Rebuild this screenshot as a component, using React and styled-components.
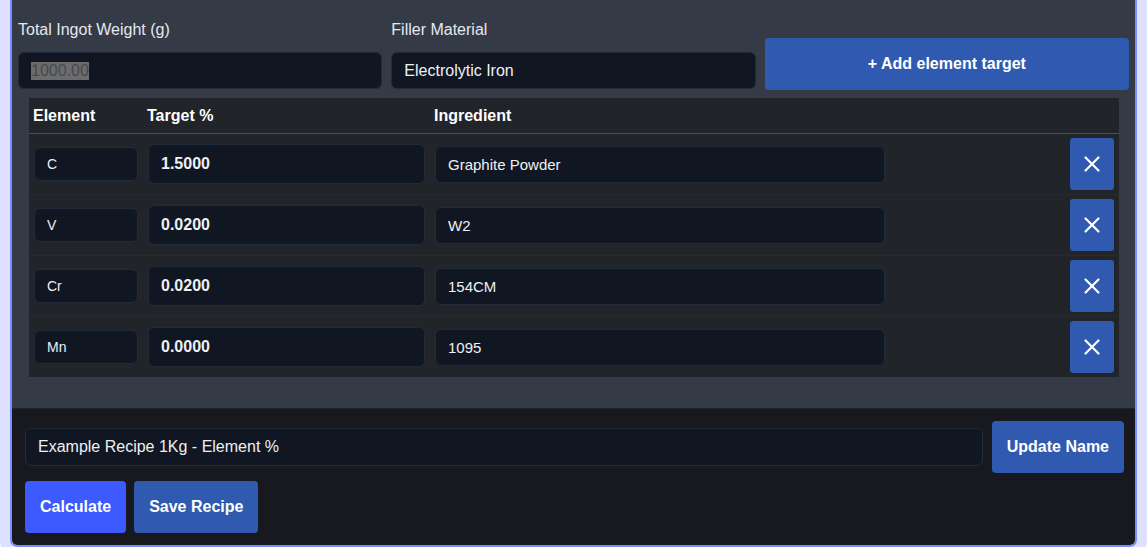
import { useEffect, useRef } from "react";
import styled, { createGlobalStyle } from "styled-components";
import { X } from "lucide-react";

const GlobalStyle = createGlobalStyle`
  html, body {
    margin: 0;
    background: #ffffff;
    overflow: hidden;
  }
  body {
    font-family: "Liberation Sans", Arial, sans-serif;
  }
  * {
    box-sizing: border-box;
  }
`;

const Page = styled.div`
  padding: 0 10px;
`;

const Panel = styled.div`
  border: 2px solid #7b8dfb;
  border-top: none;
  border-radius: 0 0 7px 7px;
  box-shadow: 0 0 0 10px #dde1fd;
  overflow: hidden;
`;

const TopSection = styled.section`
  background-color: #343a46;
  padding: 21px 6px 31px 6px;
`;

const FieldGrid = styled.div`
  display: grid;
  grid-template-columns: repeat(3, 1fr);
  column-gap: 9px;
  align-items: end;
`;

const Field = styled.div`
  display: flex;
  flex-direction: column;
`;

const Label = styled.label`
  font-size: 16px;
  line-height: 18px;
  color: #e4e8f0;
  margin-bottom: 13px;
`;

const TextInput = styled.input`
  height: ${(p) => p.$height || 37}px;
  width: 100%;
  background-color: #111722;
  border: 1px solid #222b39;
  border-radius: 6px;
  padding: 0 12px;
  font-family: inherit;
  font-size: ${(p) => p.$size || 16}px;
  font-weight: ${(p) => (p.$bold ? 700 : 400)};
  color: #eef0f4;
  outline: none;

  &::selection {
    background: #6c6c6c;
    color: #454a52;
  }
`;

const Button = styled.button`
  height: 52px;
  padding: 0 15px;
  flex-shrink: 0;
  white-space: nowrap;
  border: none;
  border-radius: 4px;
  background-color: ${(p) => (p.$primary ? "#3d5afe" : "#2f5ab0")};
  color: #ffffff;
  font-family: inherit;
  font-size: 16px;
  font-weight: 700;
  cursor: pointer;
`;

const AddButton = styled(Button)`
  width: 100%;
  margin-bottom: -1px;
`;

const Table = styled.div`
  margin: 9px 10px 0 11px;
  background-color: #212429;
`;

const GridRow = styled.div`
  display: grid;
  grid-template-columns: 104px 277px 450px 1fr 44px;
  column-gap: 10px;
  align-items: center;
`;

const HeaderRow = styled(GridRow)`
  height: 36px;
  padding: 0 5px 0 4px;
  border-bottom: 1px solid #4a4e57;
  color: #ffffff;
  font-size: 16px;
  font-weight: 700;
`;

const Row = styled(GridRow)`
  padding: 4px 5px;
  border-bottom: 1px solid #272a30;

  &:last-child {
    border-bottom: none;
  }
`;

const DeleteButton = styled.button`
  width: 44px;
  height: 52px;
  display: flex;
  align-items: center;
  justify-content: center;
  border: none;
  border-radius: 3px;
  background-color: #2f5ab0;
  color: #ffffff;
  padding: 0;
  cursor: pointer;
`;

const BottomSection = styled.section`
  background-color: #17191e;
  border-top: 1px solid #1e2431;
  padding: 12px 11px 12px 13px;
`;

const NameRow = styled.div`
  display: flex;
  align-items: center;
  gap: 9px;
`;

const ActionRow = styled.div`
  display: flex;
  gap: 8px;
  margin-top: 8px;
`;

const rows = [
  { element: "C", target: "1.5000", ingredient: "Graphite Powder" },
  { element: "V", target: "0.0200", ingredient: "W2" },
  { element: "Cr", target: "0.0200", ingredient: "154CM" },
  { element: "Mn", target: "0.0000", ingredient: "1095" },
];

export default function App() {
  const weightRef = useRef(null);

  useEffect(() => {
    if (weightRef.current) weightRef.current.select();
  }, []);

  return (
    <>
      <GlobalStyle />
      <Page>
        <Panel>
          <TopSection>
            <FieldGrid>
              <Field>
                <Label>Total Ingot Weight (g)</Label>
                <TextInput ref={weightRef} defaultValue="1000.00" />
              </Field>
              <Field>
                <Label>Filler Material</Label>
                <TextInput defaultValue="Electrolytic Iron" />
              </Field>
              <AddButton>+ Add element target</AddButton>
            </FieldGrid>

            <Table>
              <HeaderRow>
                <span>Element</span>
                <span>Target %</span>
                <span>Ingredient</span>
              </HeaderRow>
              {rows.map((row) => (
                <Row key={row.element}>
                  <TextInput $height={34} $size={14} defaultValue={row.element} />
                  <TextInput $height={40} $bold defaultValue={row.target} />
                  <TextInput $height={37} $size={15} defaultValue={row.ingredient} />
                  <span />
                  <DeleteButton aria-label="Remove">
                    <X size={26} strokeWidth={2} />
                  </DeleteButton>
                </Row>
              ))}
            </Table>
          </TopSection>

          <BottomSection>
            <NameRow>
              <TextInput $height={38} defaultValue="Example Recipe 1Kg - Element %" />
              <Button>Update Name</Button>
            </NameRow>
            <ActionRow>
              <Button $primary>Calculate</Button>
              <Button>Save Recipe</Button>
            </ActionRow>
          </BottomSection>
        </Panel>
      </Page>
    </>
  );
}
